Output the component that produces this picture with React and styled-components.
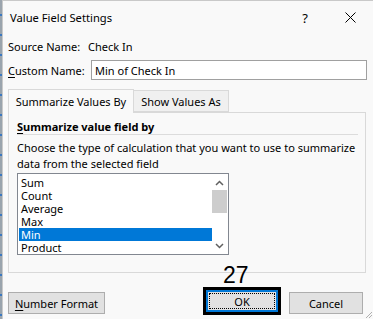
import React from 'react';
import styled, {createGlobalStyle} from 'styled-components';

const font = '"Noto Sans", "Open Sans", sans-serif';
const items = ['Sum', 'Count', 'Average', 'Max', 'Min', 'Product'];
const selected = 'Min';

const GlobalStyle = createGlobalStyle`
  html, body { margin: 0; padding: 0; background: #f9f9f9; }
  * { box-sizing: border-box; }
`;

const Frame = styled.div`
  display: flex;
  width: 373px;
  height: 319px;
  overflow: hidden;
  font-family: ${font};
  font-size: 11px;
  color: #000;
`;

// strip of the sheet showing behind the dialog
const SheetEdge = styled.div`
  flex: 0 0 2px;
  background: repeating-linear-gradient(180deg, #9aa4ad 0 14px, #3a78c0 14px 16px, #9aa4ad 16px 20px);
`;

const Dialog = styled.div`
  flex: 1;
  display: flex;
  flex-direction: column;
  background: #f9f9f9;
  border-left: 1px solid #c9c9c9;
  border-top: 1px solid #c9c9c9;
  position: relative;
`;

const TitleBar = styled.div`
  display: flex;
  align-items: center;
  height: 33px;
  padding-left: 7px;
  font-size: 11.2px;
`;

const Title = styled.div`
  flex: 1;
`;

const TitleIcon = styled.div`
  display: flex;
  align-items: center;
  justify-content: center;
  width: ${p => p.w}px;
  font-size: 13px;
`;

const Body = styled.div`
  display: flex;
  flex-direction: column;
  padding: 4px 5px 0 5px;
`;

const Row = styled.div`
  display: flex;
  align-items: center;
  height: ${p => p.h}px;
  margin-bottom: ${p => p.mb || 0}px;
`;

const Label = styled.div`
  width: ${p => p.w}px;
  flex: 0 0 auto;
`;

const U = styled.span`
  text-decoration: underline;
  text-underline-offset: 2px;
`;

const Input = styled.div`
  flex: 1;
  height: 20px;
  margin-right: 1px;
  border: 1px solid #a0a0a0;
  background: #fff;
  display: flex;
  align-items: center;
  padding-left: 3px;
`;

const Tabs = styled.div`
  display: flex;
  align-items: flex-end;
  height: 24px;
`;

const Tab = styled.div`
  display: flex;
  align-items: center;
  justify-content: center;
  width: ${p => p.w}px;
  height: ${p => (p.active ? 24 : 22)}px;
  border: 1px solid #d9d9d9;
  border-bottom: ${p => (p.active ? 'none' : '1px solid #d9d9d9')};
  border-left: ${p => (p.active ? '1px solid #d9d9d9' : 'none')};
  background: ${p => (p.active ? '#f9f9f9' : '#f0f0f0')};
  margin-bottom: ${p => (p.active ? -1 : 0)}px;
  position: relative;
  z-index: ${p => (p.active ? 1 : 0)};
`;

const Panel = styled.div`
  height: 161px;
  width: 358px;
  border: 1px solid #d9d9d9;
  padding: 5px 7px 0 8px;
  display: flex;
  flex-direction: column;
`;

const Heading = styled.div`
  font-weight: bold;
  height: 17px;
  display: flex;
  align-items: center;
  border-bottom: 1px solid #dcdcdc;
  margin-bottom: 5px;
`;

const Desc = styled.div`
  line-height: 16px;
  margin-bottom: 1px;
`;

const ListBox = styled.div`
  width: 212px;
  height: 82px;
  border: 1px solid #828790;
  background: #fff;
  display: flex;
  padding: 2px 1px 1px 1px;
`;

const Items = styled.div`
  flex: 1;
  display: flex;
  flex-direction: column;
`;

const Item = styled.div`
  height: 13px;
  line-height: 13px;
  padding-left: 2px;
  background: ${p => (p.sel ? '#0078d7' : 'transparent')};
  color: ${p => (p.sel ? '#fff' : '#000')};
`;

const ScrollBar = styled.div`
  flex: 0 0 15px;
  display: flex;
  flex-direction: column;
  align-items: center;
  margin-top: -1px;
`;

const Arrow = styled.div`
  height: 15px;
  display: flex;
  align-items: center;
  justify-content: center;
`;

const Thumb = styled.div`
  width: 15px;
  height: 23px;
  background: #cdcdcd;
`;

const Track = styled.div`
  flex: 1;
`;

const Footer = styled.div`
  display: flex;
  align-items: flex-end;
  height: 42px;
  padding-right: 5px;
`;

const Button = styled.div`
  display: flex;
  align-items: center;
  justify-content: center;
  width: ${p => p.w}px;
  height: 22px;
  background: #e1e1e1;
  border: 1px solid #adadad;
  margin-bottom: 1px;
`;

const Spacer = styled.div`
  flex: 1;
`;

const Callout = styled.div`
  position: relative;
  margin-right: 8px;
  border: 3px solid #000;
`;

const Step = styled.div`
  position: absolute;
  left: 17px;
  top: -26px;
  font-family: "Liberation Sans", Arial, sans-serif;
  font-size: 23px;
  line-height: 23px;
  color: #000;
`;

const DefaultButton = styled.div`
  width: 72px;
  height: 22px;
  border: 2px solid #0078d7;
  background: #e1e1e1;
  display: flex;
  padding: 1px;
`;

const Focus = styled.div`
  flex: 1;
  border: 1px dotted #000;
  display: flex;
  align-items: center;
  justify-content: center;
`;

const Grip = styled.svg`
  position: absolute;
  right: 0;
  bottom: 0;
`;

const Chevron = ({up}) => (
  <svg width="9" height="6" viewBox="0 0 9 6">
    <path d={up ? 'M1 5 L4.5 1.5 L8 5' : 'M1 1 L4.5 4.5 L8 1'} fill="none" stroke="#606060" strokeWidth="1.5" />
  </svg>
);

const App = () => (
  <Frame>
    <GlobalStyle />
    <SheetEdge />
    <Dialog>
      <TitleBar>
        <Title>Value Field Settings</Title>
        <TitleIcon w={60}>?</TitleIcon>
        <TitleIcon w={30}>
          <svg width="11" height="11" viewBox="0 0 11 11">
            <path d="M0.5 0.5 L10.5 10.5 M10.5 0.5 L0.5 10.5" stroke="#000" strokeWidth="1" />
          </svg>
        </TitleIcon>
        <TitleIcon w={8} />
      </TitleBar>
      <Body>
        <Row h={16} mb={6}>
          <Label w={80}>Source Name:</Label>
          <span>Check In</span>
        </Row>
        <Row h={20} mb={8}>
          <Label w={83}><U>C</U>ustom Name:</Label>
          <Input>Min of Check In</Input>
        </Row>
        <Tabs>
          <Tab w={126} active>Summarize Values By</Tab>
          <Tab w={95}>Show Values As</Tab>
        </Tabs>
        <Panel>
          <Heading><U>S</U>ummarize value field by</Heading>
          <Desc>Choose the type of calculation that you want to use to summarize data from the selected field</Desc>
          <ListBox>
            <Items>
              {items.map(it => (
                <Item key={it} sel={it === selected}>{it}</Item>
              ))}
            </Items>
            <ScrollBar>
              <Arrow><Chevron up /></Arrow>
              <Thumb />
              <Track />
              <Arrow><Chevron /></Arrow>
            </ScrollBar>
          </ListBox>
        </Panel>
        <Footer>
          <Button w={97}><U>N</U>umber Format</Button>
          <Spacer />
          <Callout>
            <Step>27</Step>
            <DefaultButton>
              <Focus>OK</Focus>
            </DefaultButton>
          </Callout>
          <Button w={74}>Cancel</Button>
        </Footer>
      </Body>
      <Grip width="10" height="10" viewBox="0 0 10 10">
        <path d="M9 3 L3 9 M9 6 L6 9" stroke="#b0b0b0" strokeWidth="1" />
      </Grip>
    </Dialog>
  </Frame>
);

export default App;
